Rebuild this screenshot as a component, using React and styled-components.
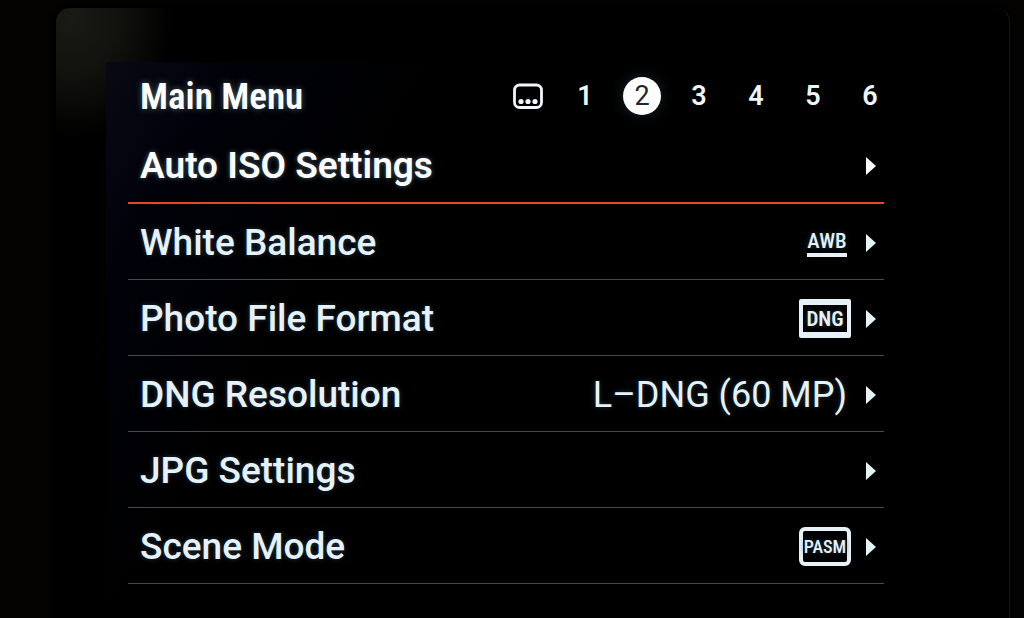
import { useState } from "react";
import styled, { createGlobalStyle } from "styled-components";

const pages = ["1", "2", "3", "4", "5", "6"];

const items = [
  { label: "Auto ISO Settings" },
  { label: "White Balance", kind: "underline", value: "AWB" },
  { label: "Photo File Format", kind: "format", value: "DNG" },
  { label: "DNG Resolution", kind: "text", value: "L–DNG (60 MP)" },
  { label: "JPG Settings" },
  { label: "Scene Mode", kind: "mode", value: "PASM" },
];

const FavoritesIcon = () => (
  <svg width="30" height="26" viewBox="0 0 30 26" aria-hidden="true">
    <rect x="1.5" y="2" width="27" height="22.5" rx="5" fill="none" stroke="currentColor" strokeWidth="2.8" />
    <circle cx="8" cy="18.5" r="2.6" fill="currentColor" />
    <circle cx="15" cy="18.5" r="2.6" fill="currentColor" />
    <circle cx="22" cy="18.5" r="2.6" fill="currentColor" />
  </svg>
);

const Value = ({ kind, value }) => {
  if (kind === "underline") return <UnderlineValue>{value}</UnderlineValue>;
  if (kind === "format") return <FormatBadge>{value}</FormatBadge>;
  if (kind === "mode") return <ModeBadge>{value}</ModeBadge>;
  if (kind === "text") return <TextValue>{value}</TextValue>;
  return null;
};

const App = () => {
  const [page, setPage] = useState("2");
  const [selected, setSelected] = useState(0);

  return (
    <>
      <GlobalStyle />
      <Glass>
        <Screen>
          <Header>
            <Title>Main Menu</Title>
            <Tabs>
              <Tab aria-label="Favorites" $active={page === "fav"} onClick={() => setPage("fav")}>
                <FavoritesIcon />
              </Tab>
              {pages.map((p) => (
                <Tab key={p} $active={page === p} onClick={() => setPage(p)}>
                  {p}
                </Tab>
              ))}
            </Tabs>
          </Header>

          <Menu>
            {items.map((item, i) => (
              <MenuItem key={item.label} $selected={i === selected}>
                <RowBtn $selected={i === selected} onClick={() => setSelected(i)}>
                  <Label>{item.label}</Label>
                  <Value kind={item.kind} value={item.value} />
                  <Arrow width="10" height="18" viewBox="0 0 10 18" aria-hidden="true">
                    <path d="M0 0L10 9L0 18Z" fill="currentColor" />
                  </Arrow>
                </RowBtn>
              </MenuItem>
            ))}
          </Menu>
        </Screen>
      </Glass>
    </>
  );
};

export default App;

const GlobalStyle = createGlobalStyle`
  * {
    box-sizing: border-box;
  }

  body {
    margin: 0;
    background-color: #050301;
    color: #eef6fb;
    font-family: Roboto, "Liberation Sans", sans-serif;
  }

  button {
    padding: 0;
    border: none;
    background: none;
    color: inherit;
    font-family: inherit;
    cursor: pointer;
  }
`;

// camera glass around the display
const Glass = styled.div`
  min-height: calc(100vh - 8px);
  margin: 8px 14px 0 56px;
  padding: 54px 102px 0 50px;
  border-right: 1px solid #161614;
  border-radius: 14px 14px 0 0;
  background: radial-gradient(ellipse 100px 120px at 16px 10px, #1a1a15, #12120e 45%, #000 100%) #000;
  box-shadow: 0 0 3px 4px #000;
`;

const Screen = styled.main`
  padding: 2px 18px 34px 22px;
  background: linear-gradient(120deg, #090914, #01020a 10%, #000 30%);
`;

const Header = styled.header`
  display: flex;
  align-items: center;
  justify-content: space-between;
  height: 64px;
  padding-left: 12px;
`;

const Title = styled.h1`
  margin: 0;
  padding-top: 2px;
  font-family: "Roboto Condensed", "Liberation Sans Narrow", Roboto, sans-serif;
  font-size: 37px;
  font-weight: 600;
  line-height: 40px;
  color: #fff;
  text-shadow: 0 0 6px #4a6070;
`;

// page tabs
const Tabs = styled.nav`
  display: flex;
  gap: 19px;
`;

const Tab = styled.button`
  display: flex;
  align-items: center;
  justify-content: center;
  width: 38px;
  height: 38px;
  border-radius: 50%;
  font-size: 27px;
  line-height: 38px;

  && {
    background-color: ${({ $active }) => ($active ? "#fff" : "transparent")};
    color: ${({ $active }) => ($active ? "#23272c" : "#eef6fb")};
    font-weight: ${({ $active }) => ($active ? 400 : 600)};
    box-shadow: ${({ $active }) => ($active ? "0 0 14px #17242e" : "none")};
  }
`;

// menu rows
const Menu = styled.ul`
  margin: 0 5px 0 0;
  padding: 0;
  list-style: none;
`;

const MenuItem = styled.li`
  border-bottom: ${({ $selected }) => ($selected ? "2px solid #e2482a" : "1px solid #454c50")};
`;

const RowBtn = styled.button`
  display: flex;
  align-items: center;
  width: 100%;
  height: ${({ $selected }) => ($selected ? "74px" : "75px")};

  && {
    padding: 2px 8px 0 12px;
    color: ${({ $selected }) => ($selected ? "#fff" : "#e6f1f8")};
    font-weight: ${({ $selected }) => ($selected ? 600 : 500)};
    text-shadow: 0 0 5px ${({ $selected }) => ($selected ? "#4a6070" : "#253a4a")};
  }
`;

const Label = styled.span`
  flex: 1;
  font-size: 37px;
  line-height: 48px;
  text-align: left;
`;

const TextValue = styled.span`
  margin-right: 4px;
  font-size: 36px;
  font-weight: 400;
  line-height: 48px;
`;

const UnderlineValue = styled.span`
  width: 40px;
  margin-right: 4px;
  border-bottom: 4px solid #e6f1f8;
  font-family: "Roboto Condensed", "Liberation Sans Narrow", Roboto, sans-serif;
  font-size: 21px;
  line-height: 24px;
`;

const Badge = styled.span`
  display: flex;
  align-items: center;
  justify-content: center;
  width: 52px;
  height: 39px;
  border: 4px solid #e6f1f8;
  font-family: "Roboto Condensed", "Liberation Sans Narrow", Roboto, sans-serif;
  font-size: 21px;
`;

const FormatBadge = styled(Badge)`
  border-width: 6px 4px;
  border-radius: 2px;
  font-weight: 600;
`;

const ModeBadge = styled(Badge)`
  border-radius: 6px;
  font-size: 18px;
`;

const Arrow = styled.svg`
  flex: none;
  margin-left: 15px;
`;
